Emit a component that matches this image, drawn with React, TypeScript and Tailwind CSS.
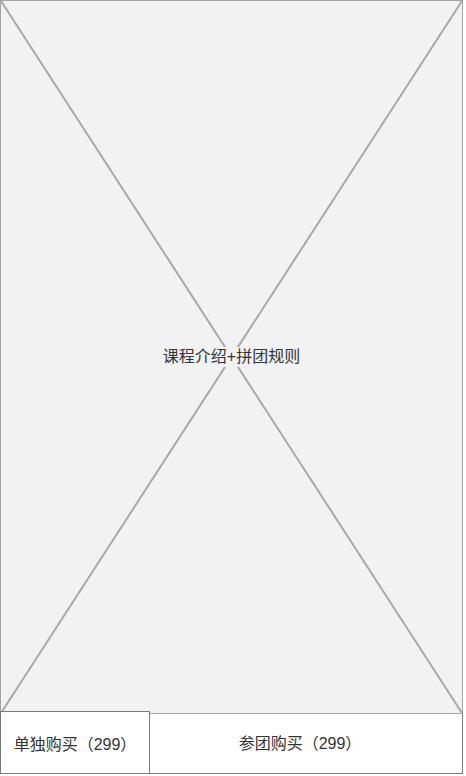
const font = { fontFamily: '"Liberation Sans", "Noto Sans CJK SC", sans-serif' };

const Placeholder = ({ label }: { label: string }) => (
  <div className="relative h-[714px] w-full border border-[#a3a3a3] bg-[#f2f2f2]">
    {/* X drawing */}
    <svg
      className="absolute inset-0 h-full w-full"
      viewBox="0 0 100 100"
      preserveAspectRatio="none"
    >
      <line x1="0" y1="0" x2="100" y2="100" stroke="#a8a8a8" strokeWidth="2" vectorEffect="non-scaling-stroke" />
      <line x1="100" y1="0" x2="0" y2="100" stroke="#a8a8a8" strokeWidth="2" vectorEffect="non-scaling-stroke" />
    </svg>
    <div className="relative flex h-full items-center justify-center">
      <span className="bg-[#f2f2f2] px-px text-[16px] leading-5 text-[#333]">{label}</span>
    </div>
  </div>
);

const App = () => {
  return (
    <div className="h-[776px] w-[466px] bg-white" style={font}>
      <div className="w-[463px]">
        <Placeholder label="课程介绍+拼团规则" />

        <div className="flex items-end">
          <button className="relative z-10 -mt-[3px] flex h-[63px] w-[150px] items-center justify-center border border-[#797979] bg-white pt-[4px] text-[16px] text-[#333]">
            单独购买（299）
          </button>
          <button className="-ml-px -mt-px flex h-[61px] flex-1 items-center justify-center border border-t-0 border-[#797979] bg-white pt-[2px] pr-[12px] text-[16px] text-[#333]">
            参团购买（299）
          </button>
        </div>
      </div>
    </div>
  );
};

export default App;
